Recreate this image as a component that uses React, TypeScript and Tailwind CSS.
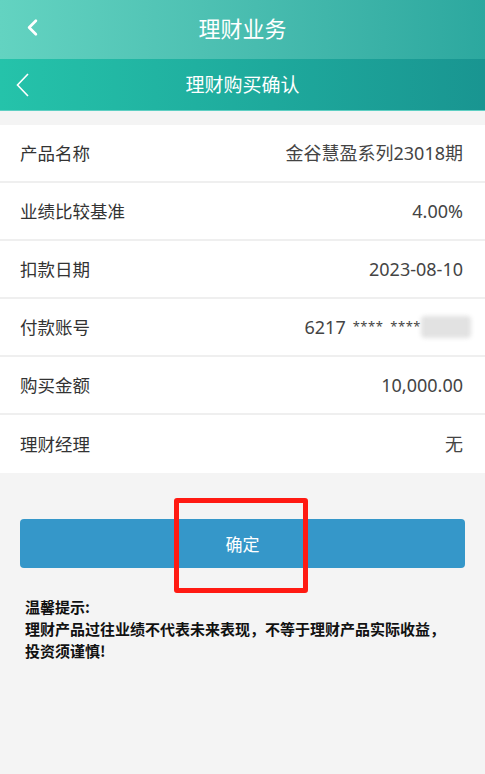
import { ChevronLeft } from "lucide-react"

const rows = [
  { label: "产品名称", value: "金谷慧盈系列23018期" },
  { label: "业绩比较基准", value: "4.00%" },
  { label: "扣款日期", value: "2023-08-10" },
  { label: "付款账号", value: "card" },
  { label: "购买金额", value: "10,000.00" },
  { label: "理财经理", value: "无" },
]

const font = { fontFamily: '"Noto Sans CJK SC", "Noto Sans", sans-serif' }
const valueFont = { fontFamily: '"Noto Sans", "Noto Sans CJK SC", sans-serif' }

export default function App() {
  return (
    <div className="min-h-[774px] w-[485px] bg-[#f4f4f4]" style={font}>
      {/* outer bar */}
      <div className="relative flex h-[59px] items-center justify-center pb-[4px] bg-gradient-to-r from-[#63d3c1] to-[#2ca89f]">
        <ChevronLeft className="absolute left-[19px] top-[14px] h-[27px] w-[27px] text-white" strokeWidth={2.4} />
        <span className="text-[22px] text-white">理财业务</span>
      </div>

      {/* inner bar */}
      <div className="relative flex h-[52px] items-center justify-center border-b border-[#5fcfc3] bg-gradient-to-r from-[#25c3aa] to-[#199591]">
        <svg className="absolute left-[15px] top-[13px]" width="16" height="26" viewBox="0 0 16 26">
          <path d="M13 2 L2.5 13 L13 24" fill="none" stroke="white" strokeWidth="1.6" />
        </svg>
        <span className="text-[19px] text-white">理财购买确认</span>
      </div>

      <div className="mt-[14px] bg-white">
        {rows.map((r, i) => (
          <div
            key={r.label}
            className={
              "flex h-[58px] items-center justify-between pl-[20px] pr-[22px] " +
              (i < rows.length - 1 ? "border-b-2 border-[#efefef]" : "")
            }
          >
            <span className="text-[17.5px] text-[#333]">{r.label}</span>
            {r.value === "card" ? (
              <span className="flex items-center text-[18px] text-[#444]" style={valueFont}>
                6217
                <span className="ml-[7px] text-[13px] tracking-[0.5px]">****</span>
                <span className="ml-[7px] text-[13px] tracking-[0.5px]">****</span>
                <span className="-mr-[8px] h-[22px] w-[50px] rounded-sm bg-[#e2e2e2] blur-[2px]" />
              </span>
            ) : (
              <span className="text-[18px] text-[#444]" style={valueFont}>
                {r.value}
              </span>
            )}
          </div>
        ))}
      </div>

      <div className="relative mx-[20px] mt-[46px]">
        <button className="flex h-[49px] w-full items-center justify-center rounded-[4px] bg-[#3597c9] text-[17px] text-white">
          确定
        </button>
        <div className="absolute left-[154px] top-[-21px] h-[95px] w-[134px] rounded-[3px] border-[5px] border-[#ff1a12]" />
      </div>

      <div className="mt-[28px] pl-[25px] text-[15px] font-bold leading-[22px] text-[#111]">
        <p>温馨提示:</p>
        <p>
          理财产品过往业绩不代表未来表现，不等于理财产品实际收益，
          <br />
          投资须谨慎!
        </p>
      </div>
    </div>
  )
}
